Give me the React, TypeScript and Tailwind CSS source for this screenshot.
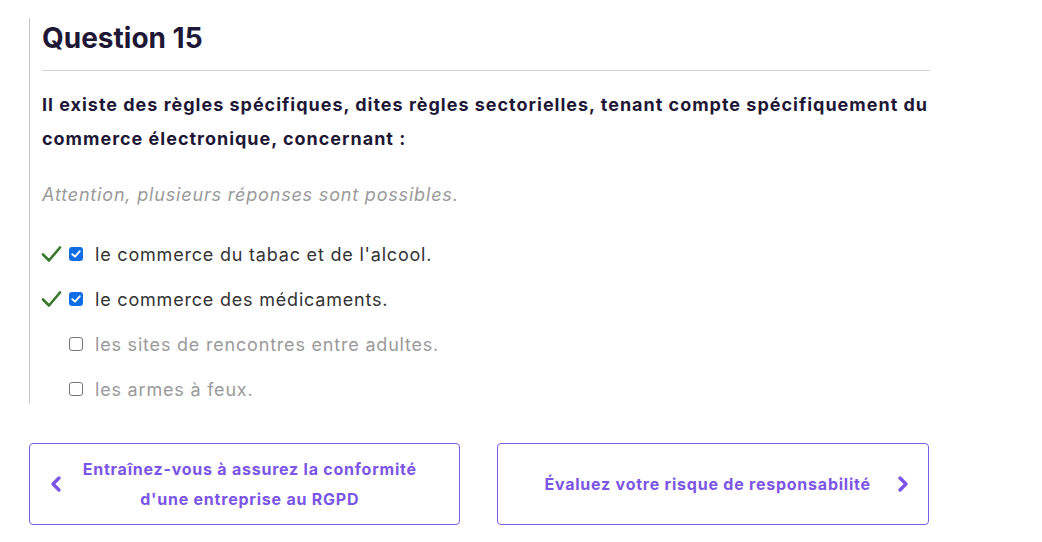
import React from "react";

const Check = () => (
  <svg width="21" height="18" viewBox="0 0 21 18" className="shrink-0">
    <path d="M2 9.5 L8 15.5 L19 2.5" fill="none" stroke="#3a782d" strokeWidth="2.6" strokeLinecap="round" strokeLinejoin="round" />
  </svg>
);

const Box = ({ checked }: { checked: boolean }) =>
  checked ? (
    <span className="w-[14px] h-[14px] rounded-[3px] bg-[#0f6ee6] flex items-center justify-center shrink-0">
      <svg width="10" height="8" viewBox="0 0 10 8">
        <path d="M1.3 4.2 L4 6.6 L8.7 1.3" fill="none" stroke="#fff" strokeWidth="1.9" strokeLinecap="round" strokeLinejoin="round" />
      </svg>
    </span>
  ) : (
    <span className="w-[14px] h-[14px] rounded-[3px] border border-[#767676] bg-white shrink-0" />
  );

const answers = [
  { t: "le commerce du tabac et de l'alcool.", c: true },
  { t: "le commerce des médicaments.", c: true },
  { t: "les sites de rencontres entre adultes.", c: false },
  { t: "les armes à feux.", c: false },
];

export default function App() {
  return (
    <div className="w-[1042px] h-[542px] bg-white font-['Inter',sans-serif] pl-[29px] pt-[18px]">
      <div className="w-[900px]">
        <div className="border-l border-[#c8c8c8] pl-[12px]">
          <h2 className="text-[28px] font-bold text-[#1e1836] leading-[40px]">Question 15</h2>
          <div className="h-px bg-[#d4d4d4] mt-[12px] w-[888px]" />
          <p className="mt-[17px] text-[18px] font-bold tracking-[0.99px] leading-[34px] text-[#1e1836] w-[890px]">
            Il existe des règles spécifiques, dites règles sectorielles, tenant compte spécifiquement du commerce électronique, concernant :
          </p>
          <p className="mt-[22px] text-[18px] italic tracking-[0.82px] text-[#9a9a9a] leading-[34px]">
            Attention, plusieurs réponses sont possibles.
          </p>
          <div className="mt-[27px] flex flex-col gap-[15px]">
            {answers.map((a) => (
              <div key={a.t} className="flex items-center h-[30px]">
                <span className="w-[28px] flex -ml-[1px]">{a.c ? <Check /> : null}</span>
                <Box checked={a.c} />
                <span className={"ml-[12px] text-[18px] tracking-[0.8px] " + (a.c ? "text-[#333333]" : "text-[#9a9a9a]")}>{a.t}</span>
              </div>
            ))}
          </div>
        </div>
        <div className="mt-[39px] flex gap-[37px]">
          <div className="w-[432px] h-[82px] border border-[#7c5ce6] rounded-[4px] flex items-center pl-[19px] pr-[24px]">
            <svg width="14" height="18" viewBox="0 0 14 18" className="shrink-0">
              <path d="M10 3 L4 9 L10 15" fill="none" stroke="#7b55e6" strokeWidth="3.4" strokeLinecap="round" strokeLinejoin="round" />
            </svg>
            <span className="flex-1 text-center text-[16px] font-bold tracking-[0.77px] leading-[30px] text-[#7b55e6] pl-[1px]">
              Entraînez-vous à assurez la conformité d'une entreprise au RGPD
            </span>
          </div>
          <div className="w-[432px] h-[82px] border border-[#7c5ce6] rounded-[4px] flex items-center pl-[46px] pr-[18px]">
            <span className="flex-1 text-[16px] font-bold tracking-[0.77px] leading-[30px] text-[#7b55e6]">
              Évaluez votre risque de responsabilité
            </span>
            <svg width="14" height="18" viewBox="0 0 14 18" className="shrink-0">
              <path d="M4 3 L10 9 L4 15" fill="none" stroke="#7b55e6" strokeWidth="3.4" strokeLinecap="round" strokeLinejoin="round" />
            </svg>
          </div>
        </div>
      </div>
    </div>
  );
}
